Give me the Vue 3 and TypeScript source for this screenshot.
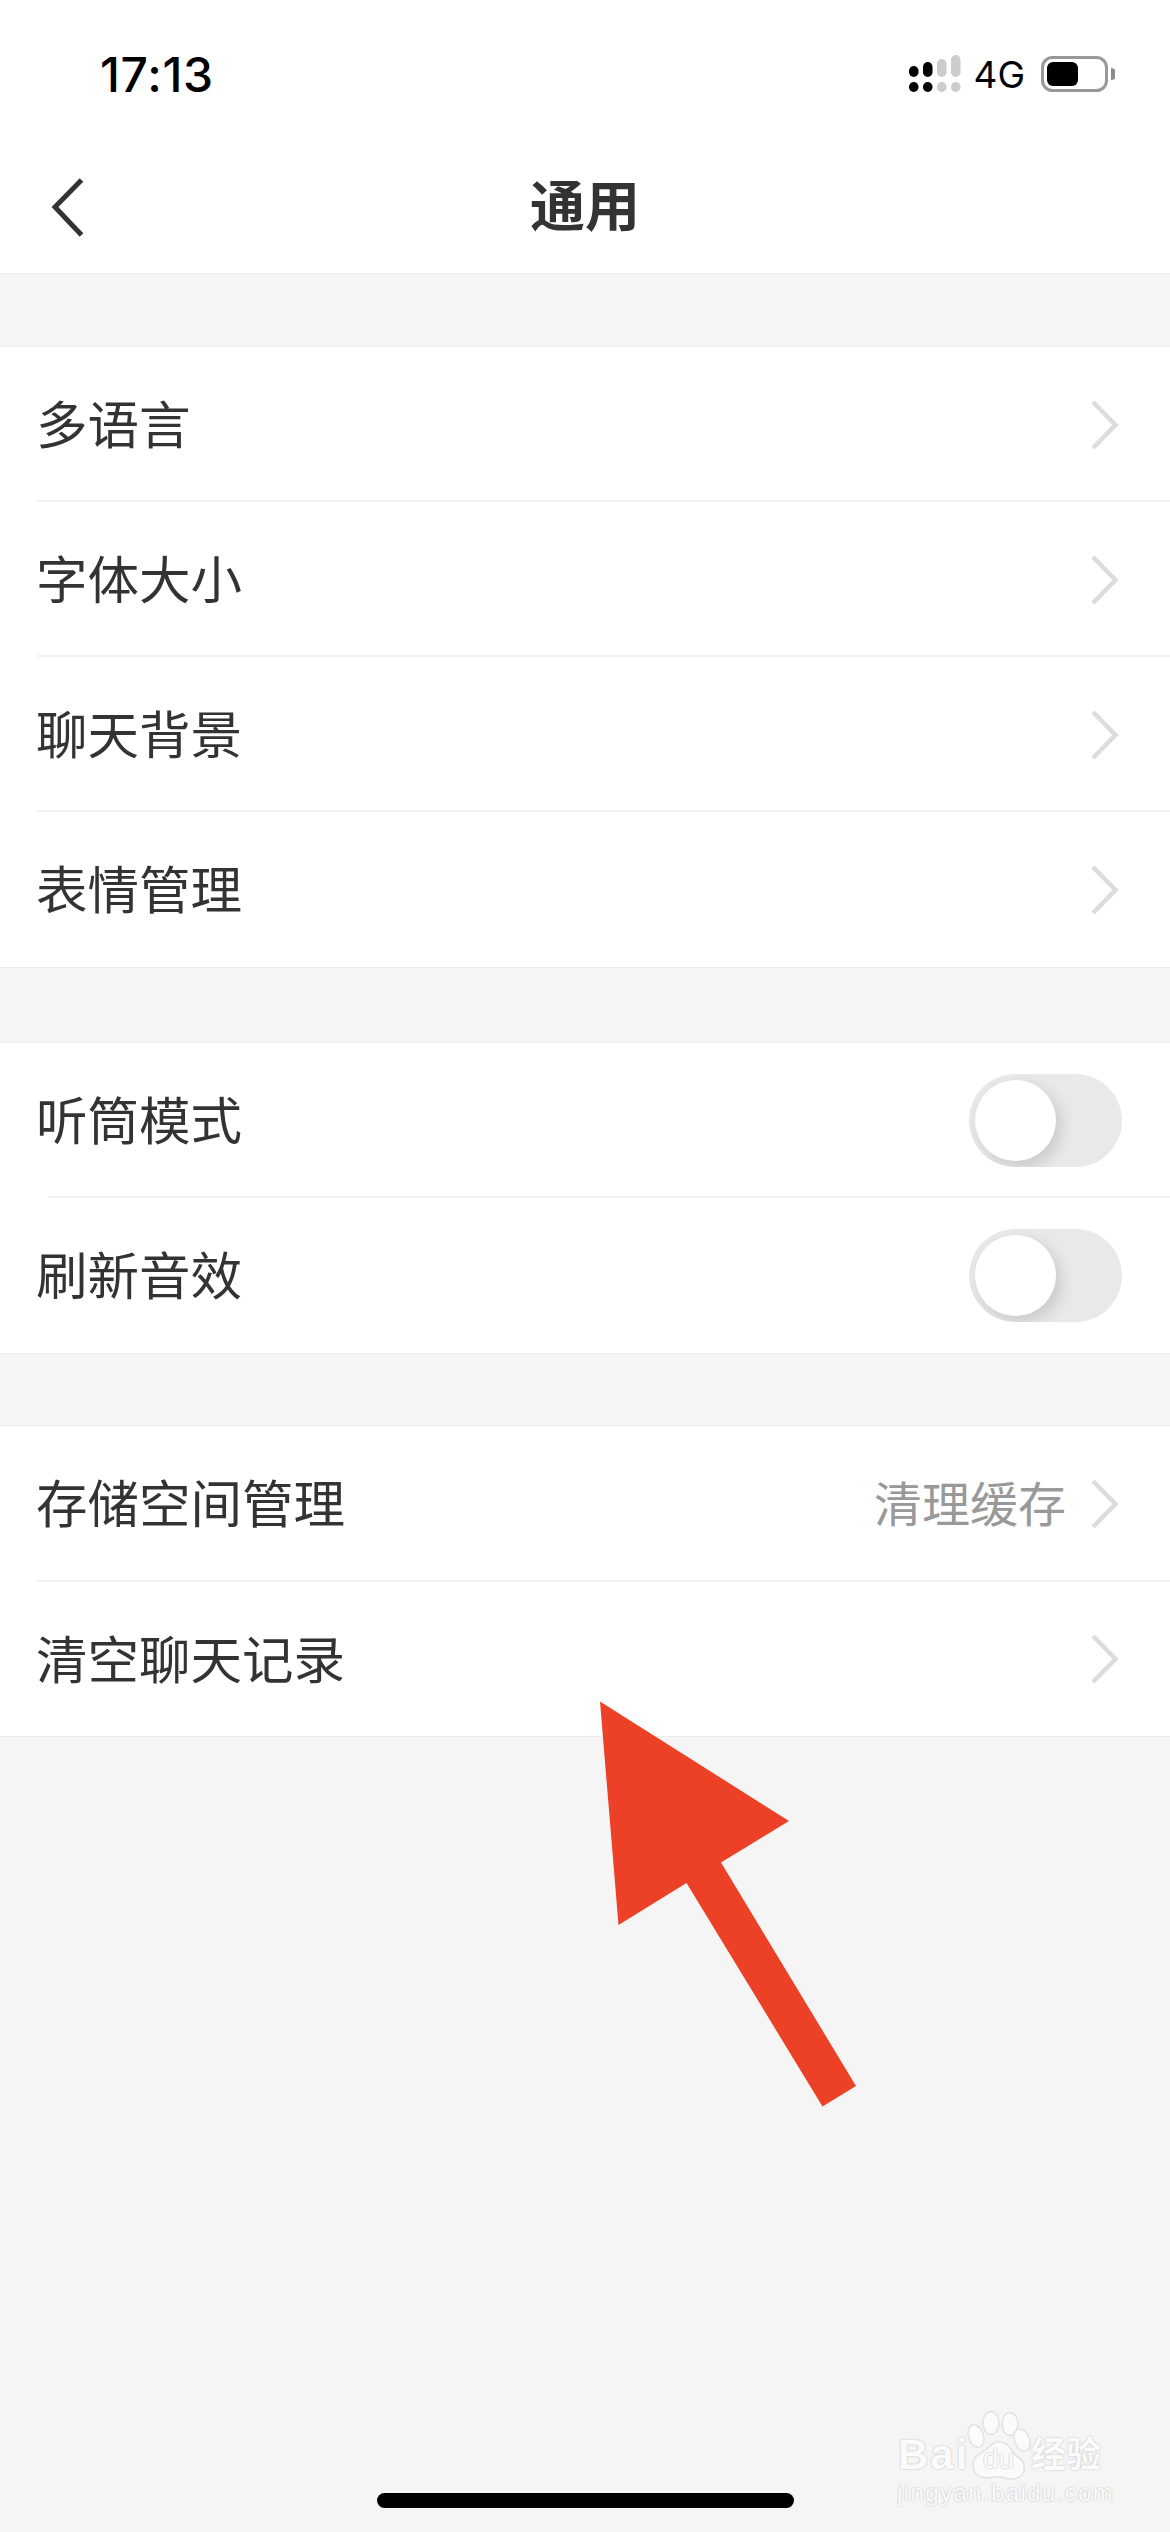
<script setup lang="ts">
// 通用设置页：分组列表 + 开关 + 右下角水印
interface SettingRow {
  label: string
  value?: string
  toggle?: boolean
}

interface SettingGroup {
  key: string
  rows: SettingRow[]
}

const groups: SettingGroup[] = [
  {
    key: 'display',
    rows: [
      { label: '多语言' },
      { label: '字体大小' },
      { label: '聊天背景' },
      { label: '表情管理' },
    ],
  },
  {
    key: 'sound',
    rows: [
      { label: '听筒模式', toggle: true },
      { label: '刷新音效', toggle: true },
    ],
  },
  {
    key: 'storage',
    rows: [
      { label: '存储空间管理', value: '清理缓存' },
      { label: '清空聊天记录' },
    ],
  },
]
</script>

<template>
  <div class="page">
    <!-- 状态栏 -->
    <header class="status-bar">
      <span class="time">17:13</span>
      <div class="status-right">
        <svg class="signal" width="52" height="38" viewBox="0 0 52 38">
          <g fill="#000">
            <rect x="0" y="11" width="9.5" height="11" rx="4.7" />
            <rect x="14" y="7" width="9.5" height="15" rx="4.7" />
            <rect x="0" y="27" width="9.5" height="10" rx="4.7" />
            <rect x="14" y="27" width="9.5" height="10" rx="4.7" />
          </g>
          <g fill="#cccccc">
            <rect x="28" y="4" width="9.5" height="18" rx="4.7" />
            <rect x="42" y="0" width="9.5" height="22" rx="4.7" />
            <rect x="28" y="27" width="9.5" height="10" rx="4.7" />
            <rect x="42" y="27" width="9.5" height="10" rx="4.7" />
          </g>
        </svg>
        <span class="network">4G</span>
        <svg class="battery" width="74" height="36" viewBox="0 0 74 36">
          <rect x="1.5" y="1.5" width="64" height="33" rx="10" fill="none" stroke="#999" stroke-width="3" />
          <rect x="6" y="6" width="31" height="24" rx="6" fill="#000" />
          <path d="M70 12 a6 6 0 0 1 0 12 z" fill="#8c8c8c" />
        </svg>
      </div>
    </header>

    <!-- 导航栏 -->
    <nav class="nav-bar">
      <svg class="back" width="40" height="64" viewBox="0 0 40 64">
        <path d="M35.5 5 L9 32 L35.5 60" fill="none" stroke="#333" stroke-width="5" />
      </svg>
      <h1 class="title">通用</h1>
      <span></span>
    </nav>

    <section v-for="group in groups" :key="group.key" class="group" :class="`group-${group.key}`">
      <div v-for="row in group.rows" :key="row.label" class="row">
        <span class="label">{{ row.label }}</span>
        <span v-if="row.value" class="value">{{ row.value }}</span>
        <div v-if="row.toggle" class="toggle">
          <span class="knob"></span>
        </div>
        <svg v-else class="chevron" width="30" height="52" viewBox="0 0 30 52">
          <path d="M3 3 L25.5 26 L3 49" fill="none" stroke="#dcdcdc" stroke-width="4.5" />
        </svg>
      </div>
    </section>

    <div class="home-indicator"></div>

    <!-- 红色指示箭头 -->
    <svg class="arrow" width="1170" height="2532" viewBox="0 0 1170 2532">
      <polygon
        points="600,1701.5 789,1821 721,1862.5 856,2086 822.5,2106.5 686.5,1883 618.5,1925"
        fill="#ec4126"
      />
    </svg>

    <!-- 经验水印 -->
    <div class="watermark">
      <svg class="paw" width="70" height="72" viewBox="0 0 70 72">
        <g fill="#fbfbfb" stroke="#e2e2e2" stroke-width="1.5">
          <ellipse cx="25" cy="13" rx="8" ry="11.5" />
          <ellipse cx="44" cy="14" rx="8" ry="11.5" />
          <ellipse cx="10" cy="26" rx="7.5" ry="11.5" transform="rotate(-18 10 26)" />
          <ellipse cx="56" cy="30" rx="7.5" ry="11.5" transform="rotate(-22 56 30)" />
          <path d="M33 32 C44 32 44 42 52 47 C62 53 60 69 46 69 C38 69 36 66 30 67 C22 68 8 70 7 56 C6 45 16 44 22 38 C26 34 28 32 33 32 Z" />
        </g>
      </svg>
      <div class="wm-brand">
        <span class="wm-bai">Bai</span>
        <span class="wm-du">du</span>
        <span class="wm-jy">经验</span>
      </div>
      <div class="wm-url">jingyan.baidu.com</div>
    </div>
  </div>
</template>

<style>
html,
body {
  margin: 0;
  background: #f5f5f5;
}
</style>

<style scoped>
.page {
  position: relative;
  display: flex;
  flex-direction: column;
  width: 1170px;
  height: 2532px;
  overflow: hidden;
  background: #f5f5f5;
  font-family: "Noto Sans CJK SC", "Noto Sans", sans-serif;
}

/* 状态栏 */
.status-bar {
  display: flex;
  align-items: center;
  justify-content: space-between;
  box-sizing: border-box;
  height: 140px;
  padding: 8px 55px 0 100px;
  background: #fff;
}

.time {
  padding-top: 2px;
  font-family: Inter, "Liberation Sans", sans-serif;
  font-size: 48px;
  font-weight: 500;
  line-height: 1;
  letter-spacing: 0.7px;
  color: #000;
}

.status-right {
  display: flex;
  align-items: center;
  gap: 16px;
}

.signal {
  margin-right: -4px;
}

.network {
  font-family: Inter, "Liberation Sans", sans-serif;
  font-size: 37px;
  line-height: 1;
  color: #000;
}

/* 导航栏 */
.nav-bar {
  display: grid;
  grid-template-columns: 1fr auto 1fr;
  align-items: center;
  height: 133px;
  padding-left: 46px;
  padding-right: 46px;
  background: #fff;
  border-bottom: 1px solid #ececec;
}

.title {
  margin: 0;
  padding-bottom: 8px;
  font-size: 55px;
  font-weight: 700;
  line-height: 1;
  color: #333;
}

/* 分组列表 */
.group {
  margin-top: 72px;
  background: #fff;
  border-top: 1px solid #ececec;
  border-bottom: 1px solid #ececec;
}

.group-sound {
  margin-top: 74px;
}

.group-storage {
  margin-top: 71px;
}

.row {
  position: relative;
  display: flex;
  align-items: center;
  box-sizing: border-box;
  height: 155px;
  padding: 0 50px 0 36px;
}

.row + .row::before {
  content: "";
  position: absolute;
  top: -2px;
  left: 37px;
  right: 0;
  height: 2px;
  background: #f2f2f2;
}

.group-sound .row + .row::before {
  left: 48px;
}

.group-storage .row + .row::before {
  top: -1px;
}

.label {
  flex: 1;
  padding-bottom: 6px;
  font-size: 51.5px;
  line-height: 1;
  color: #333;
}

.group-storage .row + .row .label {
  padding-bottom: 3px;
}

.value {
  margin-right: 24px;
  padding-bottom: 6px;
  font-size: 48px;
  line-height: 1;
  color: #999;
}

/* 开关 */
.toggle {
  display: flex;
  align-items: center;
  box-sizing: border-box;
  width: 153px;
  height: 93px;
  margin-right: -2px;
  padding-left: 6px;
  overflow: hidden;
  border-radius: 47px;
  background: #e9e9e9;
}

.knob {
  width: 81px;
  height: 81px;
  border-radius: 50%;
  background: #fff;
  box-shadow: 5px 6px 16px rgba(0, 0, 0, 0.14);
}

/* 底部横条 */
.home-indicator {
  align-self: center;
  width: 417px;
  height: 15px;
  margin-top: auto;
  margin-bottom: 24px;
  border-radius: 8px;
  background: #000;
}

.arrow {
  position: absolute;
  top: 0;
  left: 0;
  pointer-events: none;
}

/* 水印 */
.watermark {
  position: absolute;
  top: 2410px;
  left: 896px;
  width: 215px;
  height: 100px;
  font-family: "Liberation Sans", "Noto Sans CJK SC", sans-serif;
  color: #fbfbfb;
  text-shadow: 0 0 2px rgba(0, 0, 0, 0.28);
}

.paw {
  position: absolute;
  top: 0;
  left: 70px;
}

.wm-brand span {
  position: absolute;
  line-height: 1;
}

.wm-bai {
  top: 24px;
  left: 2px;
  font-size: 42px;
  font-weight: 700;
  letter-spacing: 2px;
}

.wm-du {
  top: 35px;
  left: 87px;
  font-size: 28px;
}

.wm-jy {
  top: 24px;
  left: 135px;
  font-family: "Noto Sans CJK SC", sans-serif;
  font-size: 35px;
  font-weight: 700;
}

.wm-url {
  position: absolute;
  top: 71px;
  left: 1px;
  font-size: 24px;
  line-height: 1;
  letter-spacing: 1.4px;
  white-space: nowrap;
}
</style>
